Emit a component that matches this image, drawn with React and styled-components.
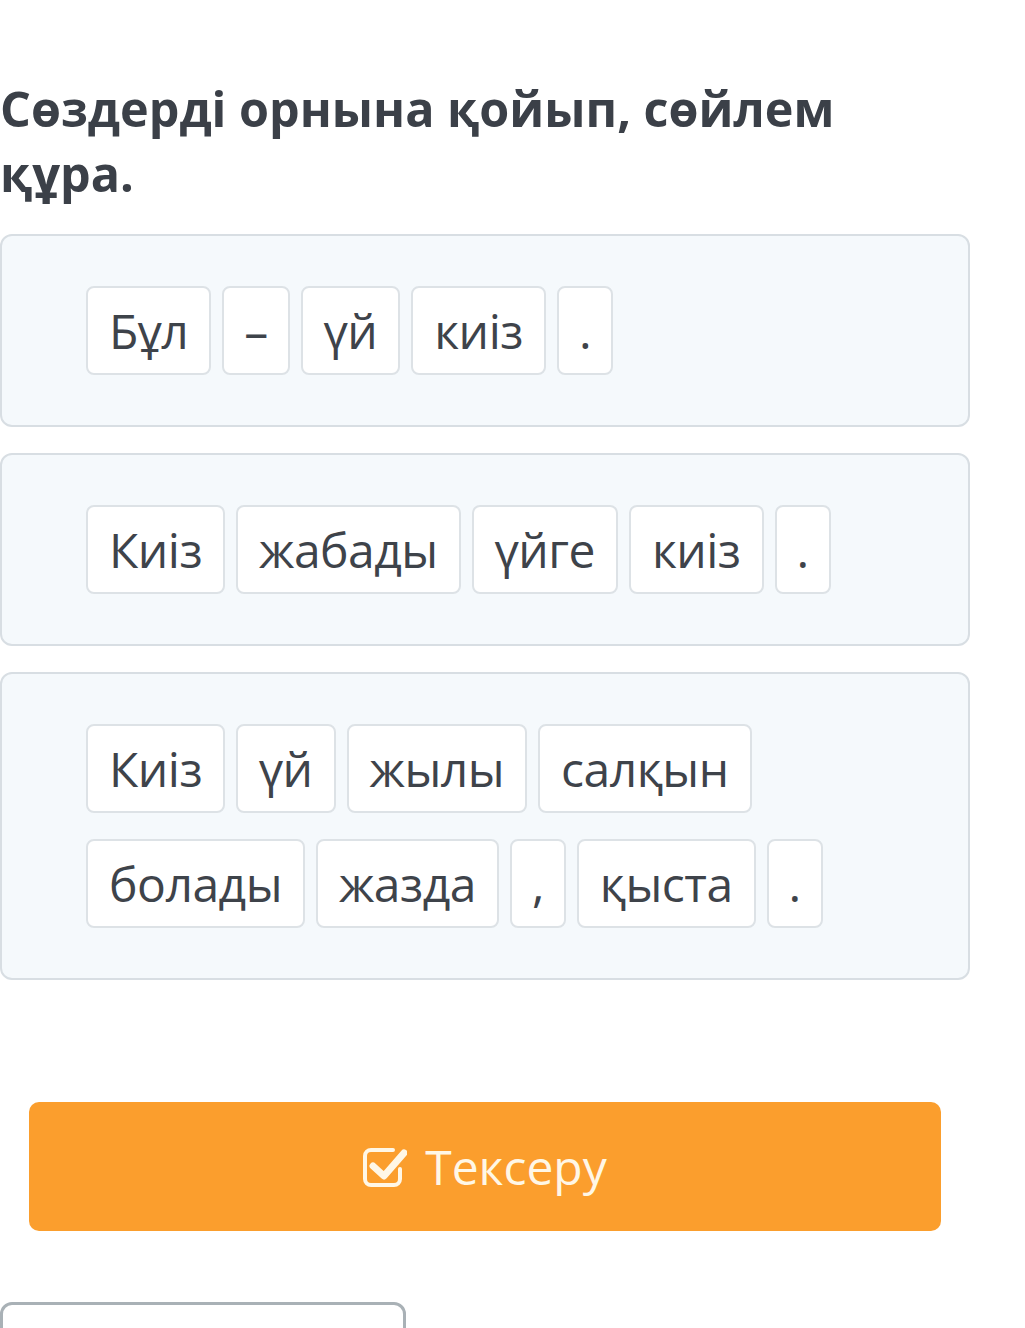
import React from 'react'
import styled, { createGlobalStyle } from 'styled-components'

const GlobalStyle = createGlobalStyle`
  html, body {
    margin: 0;
    padding: 0;
    background: #ffffff;
  }
  body {
    font-family: 'Open Sans', 'Noto Sans', sans-serif;
    color: #3e434a;
  }
`

const Page = styled.div`
  width: 1025px;
  padding-top: 76px;
  overflow: hidden;
  height: 1328px;
  box-sizing: border-box;
`

const Title = styled.h1`
  margin: 0 0 28px 0;
  max-width: 900px;
  font-size: 48.5px;
  line-height: 65px;
  font-weight: 700;
  color: #3b4048;
`

const Panels = styled.div`
  display: flex;
  flex-direction: column;
  gap: 26px;
  width: 970px;
`

const Panel = styled.div`
  background: #f5f9fc;
  border: 2px solid #d8dee3;
  border-radius: 12px;
  padding: 50px 84px;
  display: flex;
  flex-wrap: wrap;
  column-gap: 11px;
  row-gap: 26px;
`

const Chip = styled.div`
  height: 89px;
  box-sizing: border-box;
  padding: 0 ${({ narrow }) => (narrow ? 20 : 21)}px;
  background: #ffffff;
  border: 2px solid #dde2e6;
  border-radius: 8px;
  display: flex;
  align-items: center;
  font-size: 48px;
  color: #3e434a;
  letter-spacing: -0.5px;
`

const Actions = styled.div`
  padding: 122px 84px 0 29px;
`

const CheckButton = styled.button`
  width: 912px;
  height: 129px;
  border: none;
  border-radius: 10px;
  background: #fb9e2d;
  color: #fff7e6;
  font-family: 'Open Sans', 'Noto Sans', sans-serif;
  font-size: 48px;
  display: flex;
  align-items: center;
  justify-content: center;
  gap: 18px;
  cursor: pointer;
`

const Outline = styled.div`
  margin-top: 71px;
  width: 400px;
  height: 60px;
  border: 3px solid #a9b1b6;
  border-radius: 12px;
`

const CheckIcon = () => (
  <svg width="44" height="40" viewBox="0 0 44 40" fill="none">
    <path
      d="M30 3 H8 a6 6 0 0 0 -6 6 V32 a6 6 0 0 0 6 6 H31 a6 6 0 0 0 6 -6 V22"
      stroke="#fff7e6"
      strokeWidth="4"
      strokeLinecap="round"
    />
    <path
      d="M10 19 L21 29 L41 6"
      stroke="#fff7e6"
      strokeWidth="7"
      strokeLinecap="round"
      strokeLinejoin="round"
    />
  </svg>
)

const sentences = [
  [['Бұл'], ['–', true], ['үй'], ['киіз'], ['.', true]],
  [['Киіз'], ['жабады'], ['үйге'], ['киіз'], ['.', true]],
  [
    ['Киіз'],
    ['үй'],
    ['жылы'],
    ['салқын'],
    ['болады'],
    ['жазда'],
    [',', true],
    ['қыста'],
    ['.', true],
  ],
]

const App = () => (
  <>
    <GlobalStyle />
    <Page>
      <Title>Сөздерді орнына қойып, сөйлем құра.</Title>
      <Panels>
        {sentences.map((words, i) => (
          <Panel key={i}>
            {words.map(([word, narrow], j) => (
              <Chip key={j} narrow={narrow}>
                {word}
              </Chip>
            ))}
          </Panel>
        ))}
      </Panels>
      <Actions>
        <CheckButton>
          <CheckIcon />
          Тексеру
        </CheckButton>
      </Actions>
      <Outline />
    </Page>
  </>
)

export default App
